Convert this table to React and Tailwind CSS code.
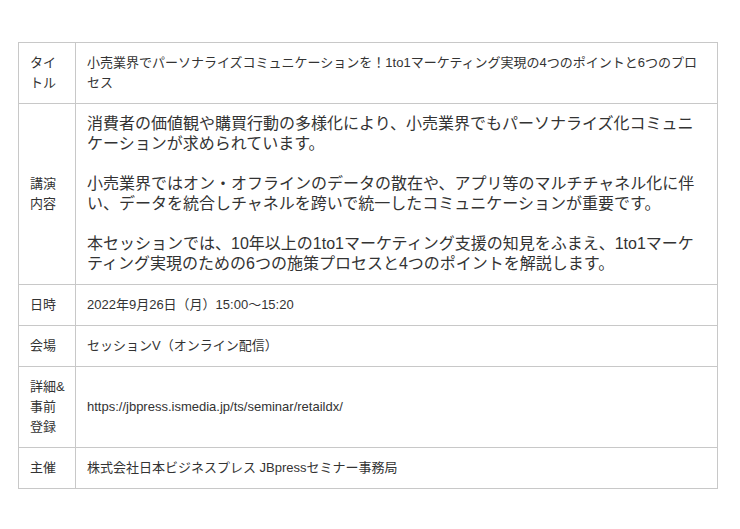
const rows = [
  {
    label: 'タイトル',
    value: '小売業界でパーソナライズコミュニケーションを！1to1マーケティング実現の4つのポイントと6つのプロセス',
  },
  {
    label: '講演内容',
    big: true,
    value: [
      '消費者の価値観や購買行動の多様化により、小売業界でもパーソナライズ化コミュニケーションが求められています。',
      '小売業界ではオン・オフラインのデータの散在や、アプリ等のマルチチャネル化に伴い、データを統合しチャネルを跨いで統一したコミュニケーションが重要です。',
      '本セッションでは、10年以上の1to1マーケティング支援の知見をふまえ、1to1マーケティング実現のための6つの施策プロセスと4つのポイントを解説します。',
    ],
  },
  { label: '日時', value: '2022年9月26日（月）15:00～15:20' },
  { label: '会場', value: 'セッションV（オンライン配信）' },
  { label: '詳細&事前登録', value: 'https://jbpress.ismedia.jp/ts/seminar/retaildx/' },
  { label: '主催', value: '株式会社日本ビジネスプレス JBpressセミナー事務局' },
]

export default function App() {
  return (
    <div
      className="min-h-screen bg-white pl-[18px] pt-[42px] text-[#333]"
      style={{ fontFamily: '"Liberation Sans", "Noto Sans CJK JP", sans-serif' }}
    >
      <table className="w-[700px] table-fixed border-collapse border border-[#c8c8c8]">
        <colgroup>
          <col className="w-[57px]" />
          <col />
        </colgroup>
        <tbody>
          {rows.map((row) => (
            <tr key={row.label}>
              <th className="border border-[#c8c8c8] pl-[11px] pr-[9px] py-[10px] text-left align-middle text-[13px] font-normal leading-[20px] break-all">
                {row.label}
              </th>
              <td className="border border-[#c8c8c8] px-[11px] py-[10px] align-middle">
                {row.big ? (
                  <div className="text-[16px] leading-[20px]">
                    {row.value.map((p, i) => (
                      <p key={i} className={i > 0 ? 'mt-[20px]' : ''}>{p}</p>
                    ))}
                  </div>
                ) : (
                  <p className="text-[13px] leading-[20px]">{row.value}</p>
                )}
              </td>
            </tr>
          ))}
        </tbody>
      </table>
    </div>
  )
}
